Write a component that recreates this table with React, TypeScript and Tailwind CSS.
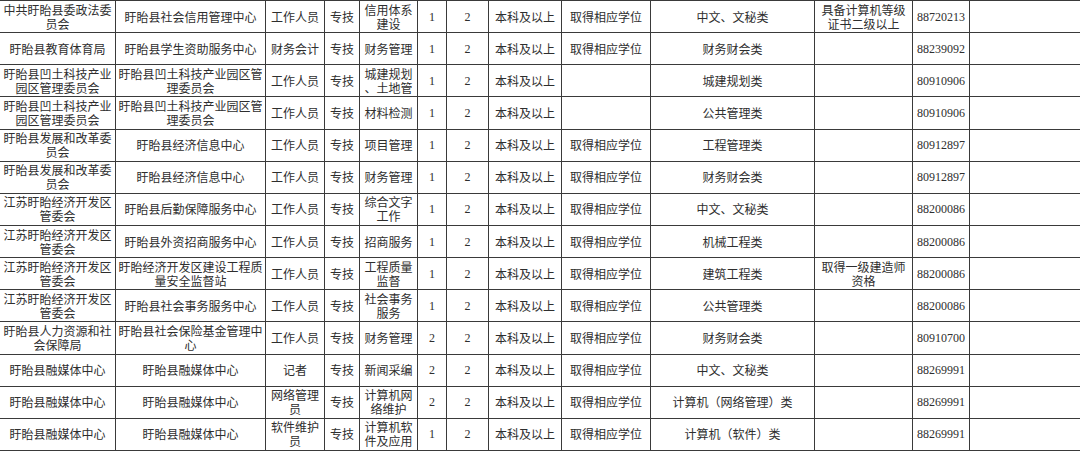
const rows: string[][] = [
  ['中共盱眙县委政法委\n员会', '盱眙县社会信用管理中心', '工作人员', '专技', '信用体系\n建设', '1', '2', '本科及以上', '取得相应学位', '中文、文秘类', '具备计算机等级\n证书二级以上', '88720213', ''],
  ['盱眙县教育体育局', '盱眙县学生资助服务中心', '财务会计', '专技', '财务管理', '1', '2', '本科及以上', '取得相应学位', '财务财会类', '', '88239092', ''],
  ['盱眙县凹土科技产业\n园区管理委员会', '盱眙县凹土科技产业园区管\n理委员会', '工作人员', '专技', '城建规划\n、土地管', '1', '2', '本科及以上', '', '城建规划类', '', '80910906', ''],
  ['盱眙县凹土科技产业\n园区管理委员会', '盱眙县凹土科技产业园区管\n理委员会', '工作人员', '专技', '材料检测', '1', '2', '本科及以上', '', '公共管理类', '', '80910906', ''],
  ['盱眙县发展和改革委\n员会', '盱眙县经济信息中心', '工作人员', '专技', '项目管理', '1', '2', '本科及以上', '取得相应学位', '工程管理类', '', '80912897', ''],
  ['盱眙县发展和改革委\n员会', '盱眙县经济信息中心', '工作人员', '专技', '财务管理', '1', '2', '本科及以上', '取得相应学位', '财务财会类', '', '80912897', ''],
  ['江苏盱眙经济开发区\n管委会', '盱眙县后勤保障服务中心', '工作人员', '专技', '综合文字\n工作', '1', '2', '本科及以上', '取得相应学位', '中文、文秘类', '', '88200086', ''],
  ['江苏盱眙经济开发区\n管委会', '盱眙县外资招商服务中心', '工作人员', '专技', '招商服务', '1', '2', '本科及以上', '取得相应学位', '机械工程类', '', '88200086', ''],
  ['江苏盱眙经济开发区\n管委会', '盱眙经济开发区建设工程质\n量安全监督站', '工作人员', '专技', '工程质量\n监督', '1', '2', '本科及以上', '取得相应学位', '建筑工程类', '取得一级建造师\n资格', '88200086', ''],
  ['江苏盱眙经济开发区\n管委会', '盱眙县社会事务服务中心', '工作人员', '专技', '社会事务\n服务', '1', '2', '本科及以上', '取得相应学位', '公共管理类', '', '88200086', ''],
  ['盱眙县人力资源和社\n会保障局', '盱眙县社会保险基金管理中\n心', '工作人员', '专技', '财务管理', '2', '2', '本科及以上', '取得相应学位', '财务财会类', '', '80910700', ''],
  ['盱眙县融媒体中心', '盱眙县融媒体中心', '记者', '专技', '新闻采编', '2', '2', '本科及以上', '取得相应学位', '中文、文秘类', '', '88269991', ''],
  ['盱眙县融媒体中心', '盱眙县融媒体中心', '网络管理\n员', '专技', '计算机网\n络维护', '2', '2', '本科及以上', '取得相应学位', '计算机（网络管理）类', '', '88269991', ''],
  ['盱眙县融媒体中心', '盱眙县融媒体中心', '软件维护\n员', '专技', '计算机软\n件及应用', '1', '2', '本科及以上', '取得相应学位', '计算机（软件）类', '', '88269991', ''],
];

// columns holding digits are set in a serif face, as in the source sheet
const serifCols = [5, 6, 11];

export default function App() {
  return (
    <div className="w-[1080px] h-[451px] overflow-hidden bg-white">
      <div className="grid grid-cols-[116px_150px_59px_35px_58px_29px_42px_73px_89px_164px_98px_57px_1fr] grid-rows-[repeat(14,minmax(0,1fr))] h-[451px] border-t border-[#3a3a3a] text-[#2e2e2e]">
        {rows.map((row, r) =>
          row.map((cell, c) => (
            <div
              key={`${r}-${c}`}
              className={`flex items-center justify-center text-center whitespace-pre-line overflow-hidden border-b border-[#3a3a3a] px-[1px] ${
                c < 12 ? 'border-r' : ''
              } ${
                serifCols.includes(c)
                  ? "font-['Liberation_Serif',serif] text-[12px] leading-[14px]"
                  : "font-['Noto_Sans_CJK_SC',sans-serif] text-[12px] leading-[14px]"
              } ${c === 11 ? 'text-[11px]' : ''}`}
            >
              {cell}
            </div>
          ))
        )}
      </div>
    </div>
  );
}
